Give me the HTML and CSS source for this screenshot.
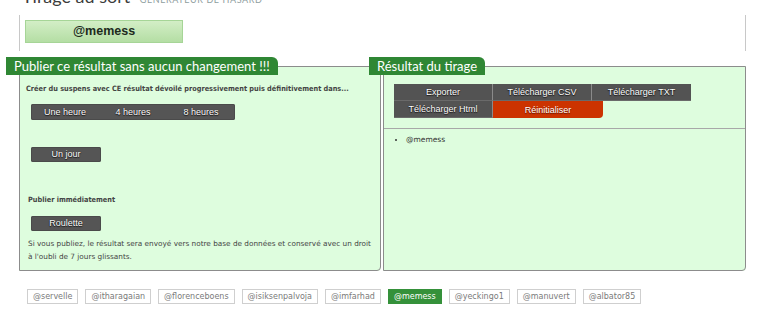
FILE: index.html
```html
<!DOCTYPE html>
<html lang="fr">
<head>
<meta charset="utf-8">
<title>Tirage au sort</title>
<link rel="stylesheet" href="styles.css">
</head>
<body>
<header class="head">
  <h1 class="title">Tirage au sort <small class="subtitle">Générateur de hasard</small></h1>
</header>
<div class="winner-wrap">
  <div class="winner">@memess</div>
</div>
<div class="panels">
  <fieldset class="panel panel-left">
    <legend class="tab">Publier ce résultat sans aucun changement !!!</legend>
    <p class="lead">Créer du suspens avec CE résultat dévoilé progressivement puis définitivement dans...</p>
    <div class="btn-group">
      <button class="btn">Une heure</button><button class="btn">4 heures</button><button class="btn">8 heures</button>
    </div>
    <div class="btn-group single day">
      <button class="btn">Un jour</button>
    </div>
    <p class="lead now">Publier immédiatement</p>
    <div class="btn-group single roul">
      <button class="btn">Roulette</button>
    </div>
    <p class="note">Si vous publiez, le résultat sera envoyé vers notre base de données et conservé avec un droit à l'oubli de 7 jours glissants.</p>
  </fieldset>
  <fieldset class="panel panel-right">
    <legend class="tab">Résultat du tirage</legend>
    <div class="actions">
      <button class="act">Exporter</button><button class="act">Télécharger CSV</button><button class="act">Télécharger TXT</button><button class="act">Télécharger Html</button><button class="act reset">Réinitialiser</button>
    </div>
    <hr class="sep">
    <ul class="results">
      <li>@memess</li>
    </ul>
  </fieldset>
</div>
<div class="tags">
  <span class="tag">@servelle</span>
  <span class="tag">@itharagaian</span>
  <span class="tag">@florenceboens</span>
  <span class="tag">@isiksenpalvoja</span>
  <span class="tag">@imfarhad</span>
  <span class="tag active">@memess</span>
  <span class="tag">@yeckingo1</span>
  <span class="tag">@manuvert</span>
  <span class="tag">@albator85</span>
</div>
</body>
</html>
```
FILE: styles.css
```css
html, body {
  margin: 0;
  padding: 0;
  background: #ffffff;
}
body {
  width: 768px;
  height: 317px;
  overflow: hidden;
  font-family: "DejaVu Sans", sans-serif;
}
.head {
  display: flow-root;
  height: 15px;
}
.title {
  margin: -18px 0 0 22px;
  font-family: "Lato", sans-serif;
  font-weight: 400;
  font-size: 18px;
  line-height: 28px;
  color: #3c3c3c;
  white-space: nowrap;
}
.subtitle {
  font-size: 9px;
  text-transform: uppercase;
  color: #8f9ea0;
  letter-spacing: 0.6px;
  margin-left: 5px;
}
.winner-wrap {
  margin-left: 19px;
  width: 715px;
  border-left: 1px solid #c8c8c8;
  border-right: 1px solid #c8c8c8;
  padding: 5px 5px 0 5px;
  height: 31px;
}
.winner {
  width: 156px;
  height: 21px;
  border: 1px solid #a6d597;
  background: linear-gradient(#d3eec6, #b4dea4);
  font-family: "Liberation Sans", sans-serif;
  font-weight: bold;
  font-size: 12.5px;
  line-height: 21px;
  text-align: center;
  color: #1d2b1d;
}
.panels {
  display: flex;
  gap: 2px;
  margin-top: 6px;
  padding-left: 19px;
}
.panel {
  margin: 0;
  padding: 0 0 7px 0;
  border: 1px solid #8c8c8c;
  border-radius: 0 0 4px 0;
  background: #defdde;
  min-width: 0;
}
.panel-left { width: 360px; }
.panel-right { width: 361px; padding-bottom: 0; }
.tab {
  margin-left: -14px;
  padding: 0 8px 0 8px;
  height: 18px;
  line-height: 18px;
  background: #2f8734;
  color: #ffffff;
  font-family: "Lato", sans-serif;
  font-size: 13px;
  border-radius: 0 6px 0 0;
  white-space: nowrap;
}
.panel-right .tab { margin-left: -15px; }
.lead {
  margin: 8px 0 0 6px;
  font-family: "DejaVu Sans Condensed", "DejaVu Sans", sans-serif;
  font-size: 7.3px;
  line-height: 12px;
  font-weight: bold;
  color: #454545;
}
.lead.now { margin-top: 32px; margin-left: 8px; }
.btn-group {
  display: flex;
  margin: 9px 0 0 11px;
  width: 204px;
  height: 16px;
  background: #555555;
  border-radius: 2px;
  box-shadow: 0 0 0 1px #4a4a4a inset;
}
.btn-group.single { width: 70px; height: 15px; }
.btn-group.day { margin-top: 27px; }
.btn-group.roul { margin-top: 10px; }
.btn {
  flex: 1;
  border: 0;
  padding: 0;
  background: transparent;
  color: #ffffff;
  font-family: "Liberation Sans", sans-serif;
  font-size: 9px;
  line-height: 15px;
  text-shadow: 0 1px 1px #1a1a1a, 0 0 1px #1a1a1a;
  cursor: pointer;
}
.note {
  margin: 6px 6px 0 8px;
  font-size: 7.3px;
  line-height: 13px;
  color: #454545;
}
.actions {
  display: flex;
  flex-wrap: wrap;
  width: 297px;
  margin: 9px 0 0 10px;
}
.act {
  width: 99px;
  height: 17px;
  padding: 0;
  border: 0;
  border-right: 1px solid #8a8a8a;
  border-bottom: 1px solid #6a6a6a;
  background: #535353;
  color: #ffffff;
  font-family: "Liberation Sans", sans-serif;
  font-size: 9px;
  line-height: 16px;
  text-shadow: 0 1px 1px #1a1a1a, 0 0 1px #1a1a1a;
  box-sizing: border-box;
}
.act:nth-child(3) { border-right: 0; }
.act.reset {
  width: 110px;
  background: #cc3300;
  border: 0;
  border-radius: 0 0 4px 0;
  text-shadow: 0 1px 1px #5a1500;
}
.sep {
  margin: 10px 0 0 0;
  border: 0;
  border-top: 1px solid #a8a8a8;
  height: 0;
}
.results {
  margin: 5px 0 0 0;
  padding-left: 22px;
  font-size: 7.5px;
  line-height: 12px;
  color: #333;
}
.tags {
  display: flex;
  gap: 7px;
  margin-top: 18px;
  padding-left: 27px;
}
.tag {
  height: 13px;
  line-height: 13px;
  padding: 0 5px;
  border: 1px solid #cfcfcf;
  font-family: "DejaVu Sans", sans-serif;
  font-size: 8px;
  color: #7a7a7a;
  background: #ffffff;
}
.tag.active {
  background: #35913a;
  border-color: #35913a;
  color: #ffffff;
}
```
